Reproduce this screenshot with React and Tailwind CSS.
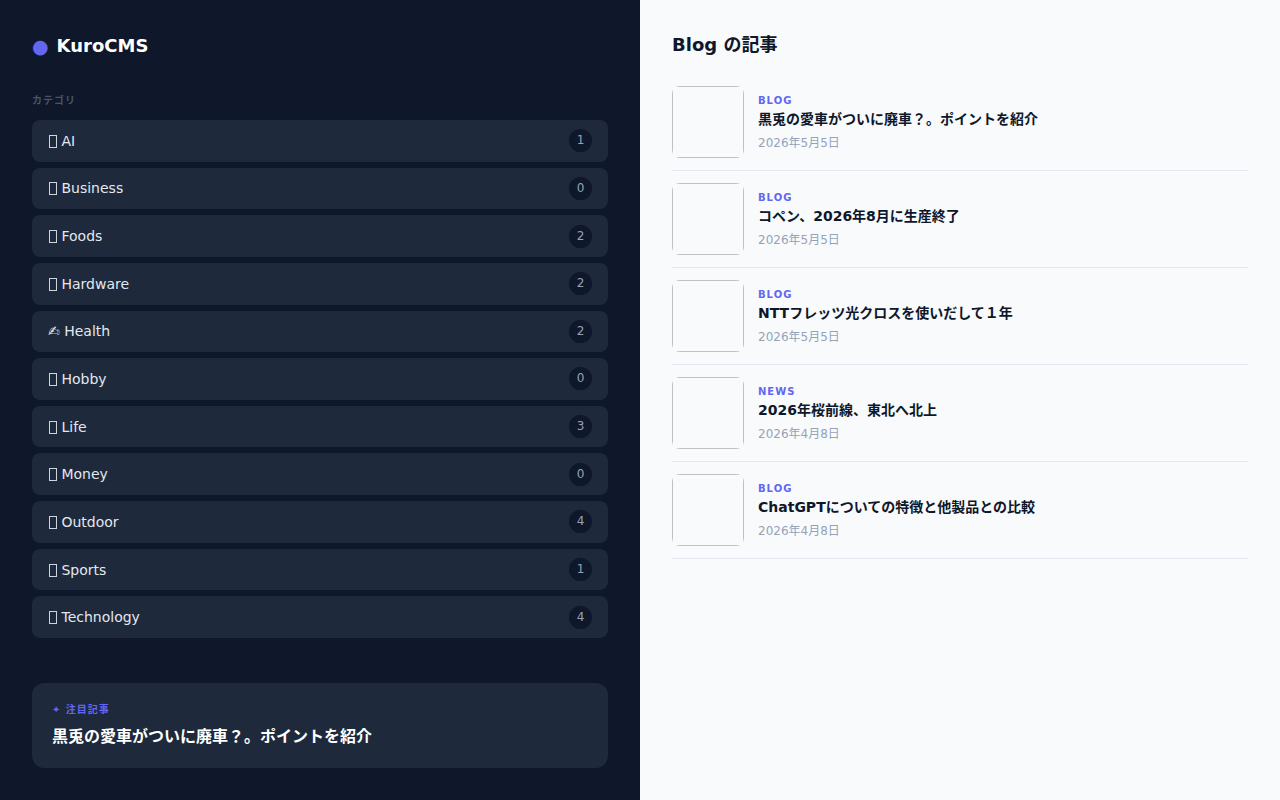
const categories = [
  { name: "AI", count: 1 },
  { name: "Business", count: 0 },
  { name: "Foods", count: 2 },
  { name: "Hardware", count: 2 },
  { icon: "✍", name: "Health", count: 2 },
  { name: "Hobby", count: 0 },
  { name: "Life", count: 3 },
  { name: "Money", count: 0 },
  { name: "Outdoor", count: 4 },
  { name: "Sports", count: 1 },
  { name: "Technology", count: 4 },
];

const articles = [
  { tag: "BLOG", title: "黒兎の愛車がついに廃車？。ポイントを紹介", date: "2026年5月5日" },
  { tag: "BLOG", title: "コペン、2026年8月に生産終了", date: "2026年5月5日" },
  { tag: "BLOG", title: "NTTフレッツ光クロスを使いだして１年", date: "2026年5月5日" },
  { tag: "NEWS", title: "2026年桜前線、東北へ北上", date: "2026年4月8日" },
  { tag: "BLOG", title: "ChatGPTについての特徴と他製品との比較", date: "2026年4月8日" },
];

// Hollow box used for categories without their own symbol.
function EmptyIcon() {
  return (
    <span
      aria-hidden="true"
      className="ml-px inline-block h-[13px] w-2 border border-[#cbd5e1] align-[-2px]"
    />
  );
}

function Sidebar() {
  return (
    <aside className="flex flex-col bg-[#0f172a] p-8">
      <a href="#" className="flex items-center text-lg leading-7 font-bold text-white">
        <span className="mr-2 text-[19px] leading-[26px] text-[#6366f1]">●</span>
        KuroCMS
      </a>
      <h2 className="mt-8 mb-3 pt-px text-[10px] leading-[15px] font-bold tracking-[1px] text-[#475569]">
        カテゴリ
      </h2>
      <ul className="grid flex-1 auto-rows-fr gap-1.5">
        {categories.map((c) => (
          <li key={c.name} className="flex">
            <a
              href="#"
              className="flex flex-1 items-center justify-between rounded-lg bg-[#1e293b] px-4 py-2 text-sm leading-5 text-[#e2e8f0]"
            >
              <span>
                {c.icon ?? <EmptyIcon />} {c.name}
              </span>
              <span className="min-w-[23px] rounded-full bg-[#0f172a] px-1.5 text-center text-xs leading-[23px] text-[#94a3b8]">
                {c.count}
              </span>
            </a>
          </li>
        ))}
      </ul>
      <a href="#" className="mt-[45px] block rounded-xl bg-[#1e293b] px-5 pt-[19px] pb-[18px]">
        <span className="block text-[10px] leading-4 font-bold tracking-[1px] text-[#6366f1]">
          ✦ 注目記事
        </span>
        <span className="mt-1.5 block text-base leading-[26px] font-bold text-white">
          黒兎の愛車がついに廃車？。ポイントを紹介
        </span>
      </a>
    </aside>
  );
}

function Article({ tag, title, date }) {
  return (
    <li className="border-b border-[#e2e8f0]">
      <a href="#" className="flex items-center gap-3.5 py-3">
        <span className="size-18 shrink-0 overflow-hidden rounded-lg">
          <span className="block size-full border border-[#c0c0c0]" />
        </span>
        <span className="flex min-w-0 flex-col">
          <span className="text-[10px] leading-4 font-bold tracking-[1px] text-[#6366f1]">{tag}</span>
          <span className="text-sm leading-5 font-bold text-[#0f172a]">{title}</span>
          <span className="mt-1.5 text-xs leading-4 text-[#94a3b8]">{date}</span>
        </span>
      </a>
    </li>
  );
}

export default function App() {
  return (
    <div
      lang="ja"
      className="grid min-h-screen grid-cols-2 font-['DejaVu_Sans','Noto_Sans_CJK_JP',sans-serif]"
    >
      <Sidebar />
      <main className="bg-[#f8fafc] p-8">
        <h1 className="mb-4 text-lg leading-[26px] font-bold text-[#0f172a]">Blog の記事</h1>
        <ul>
          {articles.map((a) => (
            <Article key={a.title} {...a} />
          ))}
        </ul>
      </main>
    </div>
  );
}
